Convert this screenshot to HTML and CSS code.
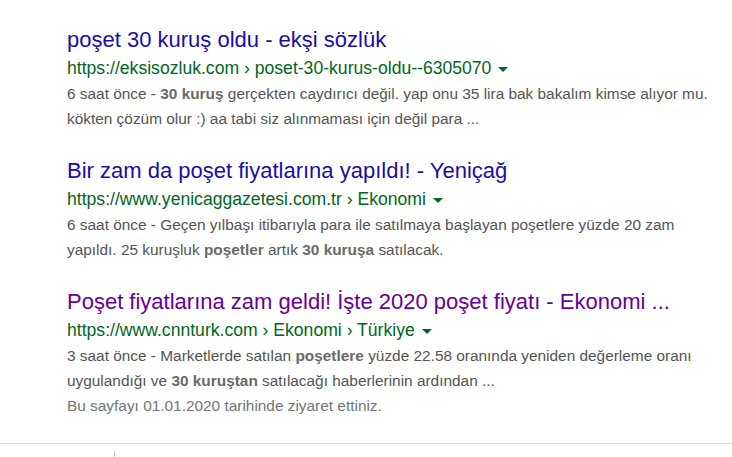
FILE: index.html
```html
<!DOCTYPE html>
<html lang="tr">
<head>
<meta charset="utf-8">
<link rel="stylesheet" href="styles.css">
</head>
<body>
<div class="results">
  <div class="result">
    <a class="title">poşet 30 kuruş oldu - ekşi sözlük</a>
    <div class="url">https://eksisozluk.com › poset-30-kurus-oldu--6305070 <span class="caret"></span></div>
    <div class="snippet">6 saat önce - <b>30 kuruş</b> gerçekten caydırıcı değil. yap onu 35 lira bak bakalım kimse alıyor mu. kökten çözüm olur :) aa tabi siz alınmaması için değil para ...</div>
  </div>
  <div class="result">
    <a class="title">Bir zam da poşet fiyatlarına yapıldı! - Yeniçağ</a>
    <div class="url">https://www.yenicaggazetesi.com.tr › Ekonomi <span class="caret"></span></div>
    <div class="snippet">6 saat önce - Geçen yılbaşı itibarıyla para ile satılmaya başlayan poşetlere yüzde 20 zam yapıldı. 25 kuruşluk <b>poşetler</b> artık <b>30 kuruşa</b> satılacak.</div>
  </div>
  <div class="result">
    <a class="title visited">Poşet fiyatlarına zam geldi! İşte 2020 poşet fiyatı - Ekonomi ...</a>
    <div class="url">https://www.cnnturk.com › Ekonomi › Türkiye <span class="caret"></span></div>
    <div class="snippet">3 saat önce - Marketlerde satılan <b>poşetlere</b> yüzde 22.58 oranında yeniden değerleme oranı uygulandığı ve <b>30 kuruştan</b> satılacağı haberlerinin ardından ...</div>
    <div class="visit">Bu sayfayı 01.01.2020 tarihinde ziyaret ettiniz.</div>
  </div>
</div>
<div class="footer"><span class="tick"></span></div>
</body>
</html>
```
FILE: styles.css
```css
html, body { margin: 0; padding: 0; background: #fff; }
body { font-family: "Liberation Sans", Arial, sans-serif; width: 732px; height: 457px; overflow: hidden; }
.results { padding: 26px 0 0 67px; width: 650px; display: flex; flex-direction: column; gap: 26px; }
.result { display: flex; flex-direction: column; }
.title { font-size: 22px; line-height: 28px; color: #1a0dab; text-decoration: none; white-space: nowrap; }
.title.visited { color: #660099; }
.url { font-size: 17.6px; line-height: 28px; color: #006621; white-space: nowrap; display: flex; align-items: center; gap: 7px; }
.caret { width: 0; height: 0; border-left: 5px solid transparent; border-right: 5px solid transparent; border-top: 5px solid #006621; margin-top: 2px; }
.snippet, .visit { font-size: 15.4px; line-height: 24.5px; color: #545454; }
.snippet b { color: #6a6a6a; }
.visit { color: #70757a; margin-top: 1px; }
.footer { position: absolute; left: 0; top: 443px; width: 732px; height: 14px; border-top: 1px solid #dadada; }
.tick { position: absolute; left: 114px; top: 7px; width: 1px; height: 7px; background: #cfc4cc; }
```
